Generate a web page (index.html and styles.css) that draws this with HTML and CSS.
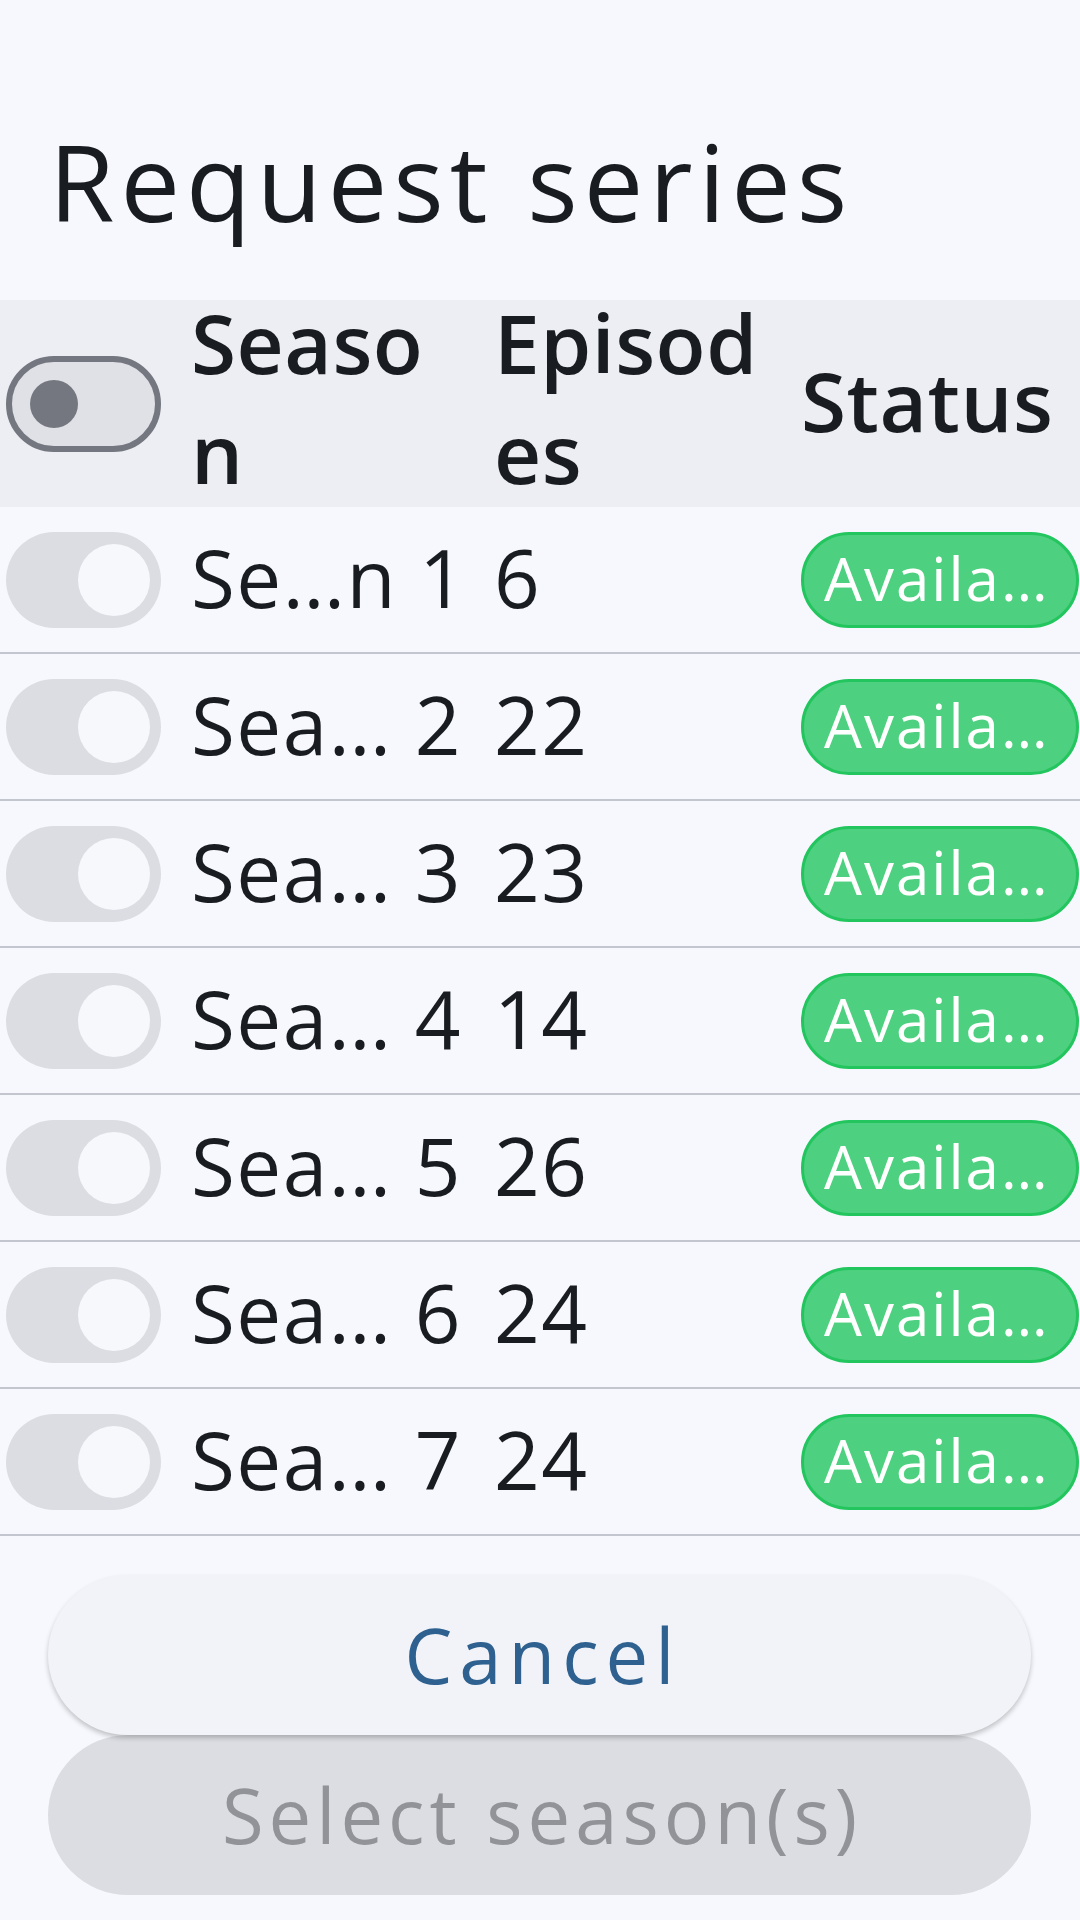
FILE: index.html
```html
<!DOCTYPE html>
<html>
<head>
<meta charset="utf-8">
<link rel="stylesheet" href="styles.css">
</head>
<body>
<div class="screen">
  <h1 class="title">Request series</h1>
  <div class="table">
    <div class="row head">
      <div class="cell c-toggle"><span class="switch off"><span class="knob"></span></span></div>
      <div class="cell c-season hd">Seaso<br>n</div>
      <div class="cell c-eps hd">Episod<br>es</div>
      <div class="cell c-status hd">Status</div>
    </div>
    <div class="row">
      <div class="cell c-toggle"><span class="switch on"><span class="knob"></span></span></div>
      <div class="cell c-season txt">Se…n 1</div>
      <div class="cell c-eps txt">6</div>
      <div class="cell c-status"><span class="badge">Availa…</span></div>
    </div>
    <div class="row">
      <div class="cell c-toggle"><span class="switch on"><span class="knob"></span></span></div>
      <div class="cell c-season txt">Sea… 2</div>
      <div class="cell c-eps txt">22</div>
      <div class="cell c-status"><span class="badge">Availa…</span></div>
    </div>
    <div class="row">
      <div class="cell c-toggle"><span class="switch on"><span class="knob"></span></span></div>
      <div class="cell c-season txt">Sea… 3</div>
      <div class="cell c-eps txt">23</div>
      <div class="cell c-status"><span class="badge">Availa…</span></div>
    </div>
    <div class="row">
      <div class="cell c-toggle"><span class="switch on"><span class="knob"></span></span></div>
      <div class="cell c-season txt">Sea… 4</div>
      <div class="cell c-eps txt">14</div>
      <div class="cell c-status"><span class="badge">Availa…</span></div>
    </div>
    <div class="row">
      <div class="cell c-toggle"><span class="switch on"><span class="knob"></span></span></div>
      <div class="cell c-season txt">Sea… 5</div>
      <div class="cell c-eps txt">26</div>
      <div class="cell c-status"><span class="badge">Availa…</span></div>
    </div>
    <div class="row">
      <div class="cell c-toggle"><span class="switch on"><span class="knob"></span></span></div>
      <div class="cell c-season txt">Sea… 6</div>
      <div class="cell c-eps txt">24</div>
      <div class="cell c-status"><span class="badge">Availa…</span></div>
    </div>
    <div class="row">
      <div class="cell c-toggle"><span class="switch on"><span class="knob"></span></span></div>
      <div class="cell c-season txt">Sea… 7</div>
      <div class="cell c-eps txt">24</div>
      <div class="cell c-status"><span class="badge">Availa…</span></div>
    </div>
  </div>
  <div class="actions">
    <button class="btn btn-cancel">Cancel</button>
    <button class="btn btn-select">Select season(s)</button>
  </div>
</div>
</body>
</html>
```

FILE: styles.css
```css
html, body {
  margin: 0;
  padding: 0;
  background: #f7f8fd;
}
body {
  width: 1080px;
  height: 1920px;
  overflow: hidden;
  font-family: "Open Sans", "DejaVu Sans", sans-serif;
  color: #191c20;
}
.screen {
  display: flex;
  flex-direction: column;
}
.title {
  margin: 0;
  padding: 118px 0 55px 49px;
  font-size: 106px;
  font-weight: 400;
  line-height: 127px;
  letter-spacing: 6px;
  color: #191c20;
}
.table {
  display: flex;
  flex-direction: column;
}
.row {
  display: grid;
  grid-template-columns: 189px 303px 303px 285px;
  height: 145px;
  border-bottom: 2px solid #c3c6ce;
  align-items: center;
}
.row.head {
  height: 207px;
  border-bottom: none;
  background: #edeef3;
}
.cell {
  padding-left: 6px;
  display: flex;
  align-items: center;
  white-space: nowrap;
}
.c-season, .c-eps {
  padding-left: 2px;
}
.c-status {
  padding-right: 1px;
}
.hd {
  font-size: 82px;
  font-weight: 600;
  line-height: 110px;
  letter-spacing: 0.5px;
  display: block;
  margin-top: -14px;
}
.c-status.hd {
  margin-top: -8px;
  padding-left: 6px;
}
.txt {
  font-size: 80px;
  line-height: 96px;
  padding-bottom: 6px;
  letter-spacing: 1.5px;
}
.switch {
  position: relative;
  display: block;
  box-sizing: border-box;
  width: 155px;
  height: 96px;
  border-radius: 48px;
}
.switch.on {
  background: #dcdde2;
}
.switch.off {
  background: #e0e1e6;
  border: 6px solid #74777f;
}
.switch .knob {
  position: absolute;
  border-radius: 50%;
}
.switch.on .knob {
  width: 72px;
  height: 72px;
  top: 12px;
  right: 11px;
  background: #f7f8fc;
}
.switch.off .knob {
  width: 48px;
  height: 48px;
  top: 18px;
  left: 18px;
  background: #74777f;
}
.badge {
  box-sizing: border-box;
  display: flex;
  align-items: center;
  width: 278px;
  height: 96px;
  border-radius: 48px;
  background: #4dd07f;
  border: 3px solid #22c55e;
  color: #ffffff;
  font-size: 60px;
  letter-spacing: 2px;
  padding-left: 20px;
  padding-bottom: 3px;
  white-space: nowrap;
  overflow: hidden;
}
.actions {
  display: flex;
  flex-direction: column;
  padding: 39px 49px 0 48px;
}
.btn {
  display: block;
  width: 983px;
  height: 160px;
  border: none;
  border-radius: 80px;
  font-family: "Open Sans", "DejaVu Sans", sans-serif;
  font-size: 76px;
  line-height: 160px;
  padding: 0 0 4px 0;
  margin: 0;
}
.btn-cancel {
  position: relative;
  z-index: 1;
  background: #f2f3f8;
  color: #2e6190;
  letter-spacing: 7px;
  padding-left: 7px;
  box-shadow: 0 3px 5px rgba(0, 0, 0, 0.22);
}
.btn-select {
  background: #dcdde2;
  color: #919398;
  letter-spacing: 5px;
  padding-left: 5px;
}
```
